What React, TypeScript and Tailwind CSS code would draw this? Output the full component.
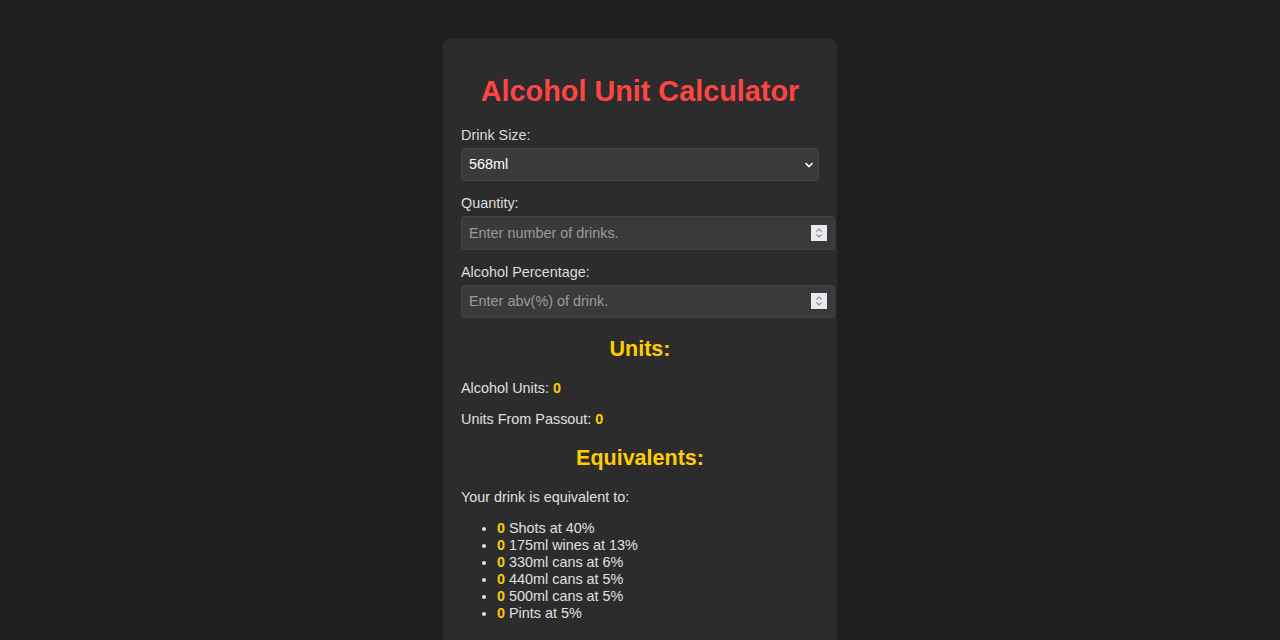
import React from "react";

function Spinner() {
  return (
    <div className="pointer-events-none absolute right-[7px] top-1/2 flex h-[16px] w-[16px] -translate-y-1/2 flex-col items-center justify-center bg-[#e9e9ef]">
      <svg width="10" height="14" viewBox="0 0 10 14" fill="none" stroke="#8a8a94" strokeWidth="1.1">
        <path d="M2.5 5.5 L5 3 L7.5 5.5" />
        <path d="M2.5 8.5 L5 11 L7.5 8.5" />
      </svg>
    </div>
  );
}

export default function App() {
  const items = [
    "Shots at 40%",
    "175ml wines at 13%",
    "330ml cans at 6%",
    "440ml cans at 5%",
    "500ml cans at 5%",
    "Pints at 5%",
  ];
  return (
    <div
      className="min-h-[640px] bg-[#1e1e1e] pt-[38px] text-[14.4px] text-[#e0e0e0]"
      style={{ fontFamily: '"Liberation Sans", Arial, sans-serif' }}
    >
      <div className="mx-auto w-[394px] rounded-[8px] bg-[#2c2c2c] p-[18px] pb-[40px]">
        <h1 className="mb-[20px] mt-[19px] text-center text-[28.8px] font-bold leading-[32px] text-[#ff4444]">
          Alcohol Unit Calculator
        </h1>

        <div className="mb-[14px]">
          <label className="mb-[4px] block leading-[16.5px] text-[#dddddd]">Drink Size:</label>
          <div className="relative h-[33px] w-[358px] rounded-[4px] border border-[#444444] bg-[#3a3a3a]">
            <div className="flex h-full items-center px-[7px] pt-[1px] text-[14.4px] text-white">568ml</div>
            <svg
              className="absolute right-[4px] top-[12px]"
              width="10"
              height="8"
              viewBox="0 0 10 8"
              fill="none"
              stroke="#ffffff"
              strokeWidth="1.6"
            >
              <path d="M1.5 2 L5 5.5 L8.5 2" />
            </svg>
          </div>
        </div>

        <div className="mb-[14px]">
          <label className="mb-[5px] block leading-[16.5px] text-[#dddddd]">Quantity:</label>
          <div className="relative h-[34px] w-[374px] rounded-[4px] border border-[#444444] bg-[#3a3a3a]">
            <div className="flex h-full items-center px-[7px] pt-[1px] text-[14.4px] text-[#9a9a9a]">
              Enter number of drinks.
            </div>
            <Spinner />
          </div>
        </div>

        <div>
          <label className="mb-[4px] block leading-[16.5px] text-[#dddddd]">Alcohol Percentage:</label>
          <div className="relative h-[33px] w-[374px] rounded-[4px] border border-[#444444] bg-[#3a3a3a]">
            <div className="flex h-full items-center px-[7px] pt-[1px] text-[14.4px] text-[#9a9a9a]">
              Enter abv(%) of drink.
            </div>
            <Spinner />
          </div>
        </div>

        <h2 className="mt-[19.5px] text-center text-[21.5px] font-bold leading-[25px] text-[#ffcc00]">Units:</h2>
        <p className="mt-[18px] leading-[16.5px]">
          Alcohol Units: <span className="font-bold text-[#ffcc00]">0</span>
        </p>
        <p className="mt-[14.5px] leading-[16.5px]">
          Units From Passout: <span className="font-bold text-[#ffcc00]">0</span>
        </p>

        <h2 className="mt-[18px] text-center text-[21.5px] font-bold leading-[25px] text-[#ffcc00]">
          Equivalents:
        </h2>
        <p className="mt-[18px] leading-[16.5px]">Your drink is equivalent to:</p>
        <ul className="mt-[14.5px] list-disc pl-[36px] leading-[17px] marker:text-[#e0e0e0]">
          {items.map((t) => (
            <li key={t}>
              <span className="font-bold text-[#ffcc00]">0</span> {t}
            </li>
          ))}
        </ul>
      </div>
    </div>
  );
}
